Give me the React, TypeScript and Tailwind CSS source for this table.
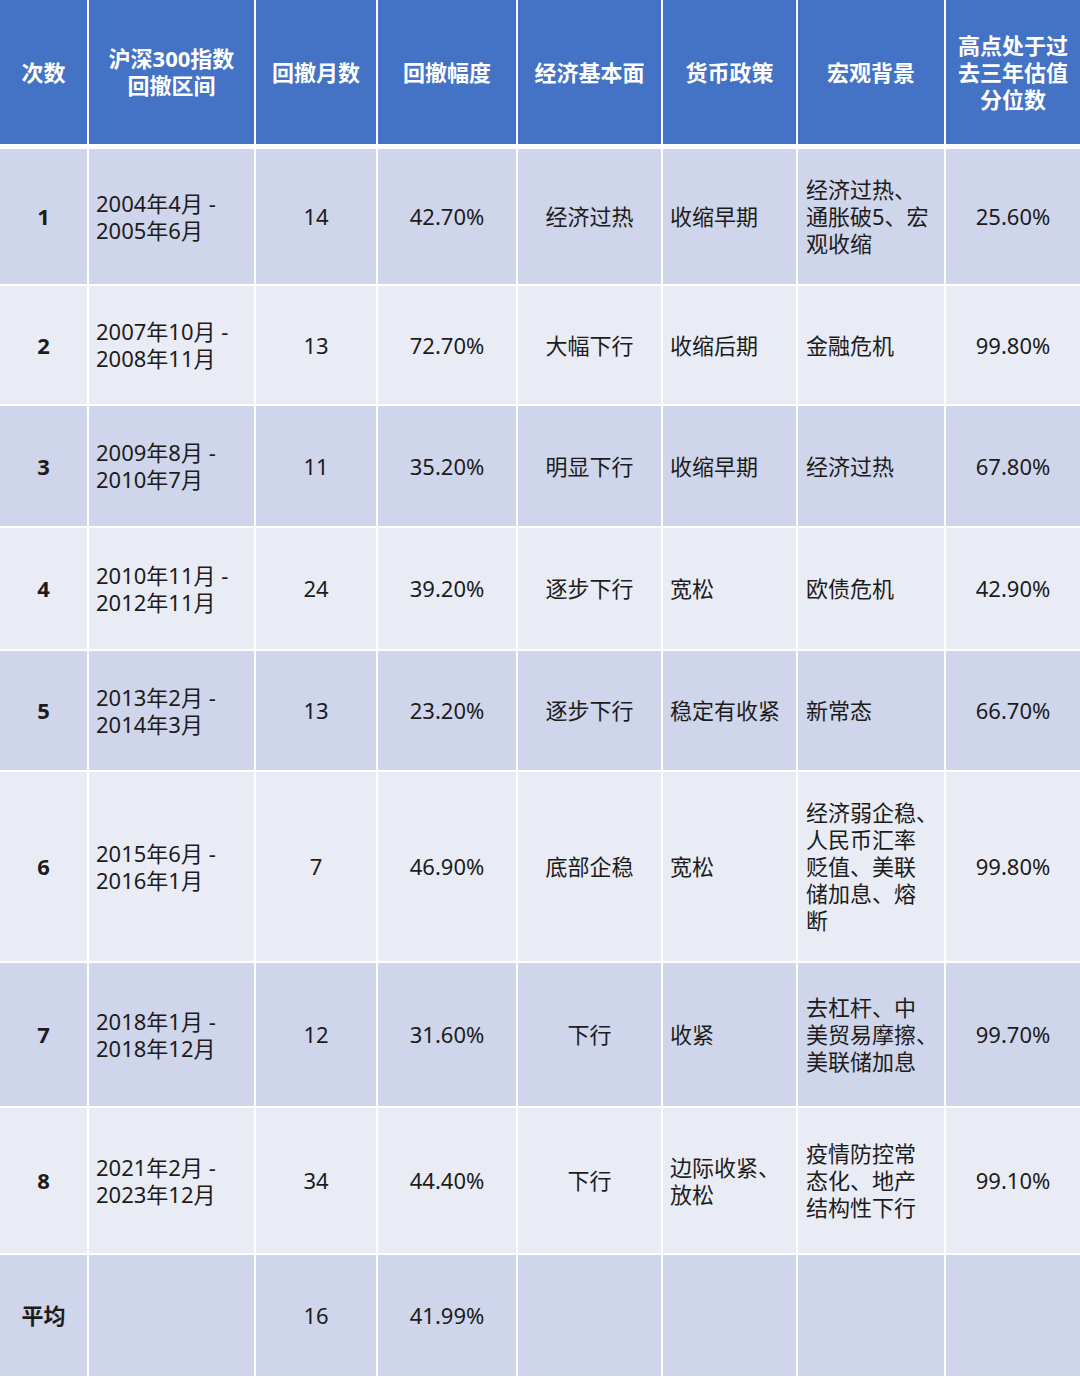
import React from "react";

type Row = {
  no: string;
  range: string[];
  months: string;
  drop: string;
  econ: string;
  policy: string[];
  macro: string[];
  pct: string;
  h: string;
  dark: boolean;
};

const rows: Row[] = [
  { no: "1", range: ["2004年4月 -", "2005年6月"], months: "14", drop: "42.70%", econ: "经济过热", policy: ["收缩早期"], macro: ["经济过热、", "通胀破5、宏", "观收缩"], pct: "25.60%", h: "h-[135px]", dark: true },
  { no: "2", range: ["2007年10月 -", "2008年11月"], months: "13", drop: "72.70%", econ: "大幅下行", policy: ["收缩后期"], macro: ["金融危机"], pct: "99.80%", h: "h-[118px]", dark: false },
  { no: "3", range: ["2009年8月 -", "2010年7月"], months: "11", drop: "35.20%", econ: "明显下行", policy: ["收缩早期"], macro: ["经济过热"], pct: "67.80%", h: "h-[120px]", dark: true },
  { no: "4", range: ["2010年11月 -", "2012年11月"], months: "24", drop: "39.20%", econ: "逐步下行", policy: ["宽松"], macro: ["欧债危机"], pct: "42.90%", h: "h-[121px]", dark: false },
  { no: "5", range: ["2013年2月 -", "2014年3月"], months: "13", drop: "23.20%", econ: "逐步下行", policy: ["稳定有收紧"], macro: ["新常态"], pct: "66.70%", h: "h-[119px]", dark: true },
  { no: "6", range: ["2015年6月 -", "2016年1月"], months: "7", drop: "46.90%", econ: "底部企稳", policy: ["宽松"], macro: ["经济弱企稳、", "人民币汇率", "贬值、美联", "储加息、熔", "断"], pct: "99.80%", h: "h-[189px]", dark: false },
  { no: "7", range: ["2018年1月 -", "2018年12月"], months: "12", drop: "31.60%", econ: "下行", policy: ["收紧"], macro: ["去杠杆、中", "美贸易摩擦、", "美联储加息"], pct: "99.70%", h: "h-[143px]", dark: true },
  { no: "8", range: ["2021年2月 -", "2023年12月"], months: "34", drop: "44.40%", econ: "下行", policy: ["边际收紧、", "放松"], macro: ["疫情防控常", "态化、地产", "结构性下行"], pct: "99.10%", h: "h-[145px]", dark: false },
];

const cols = "grid grid-cols-[87px_165px_120px_138px_143px_133px_146px_1fr] gap-x-[2px]";

// one text block, lines split by <br/>
function Lines({ items }: { items: string[] }) {
  return (
    <p className="whitespace-nowrap">
      {items.map((t, i) => (
        <React.Fragment key={i}>
          {i > 0 && <br />}
          {t}
        </React.Fragment>
      ))}
    </p>
  );
}

export default function App() {
  const head = "bg-[#4472c4] text-white font-bold flex items-center justify-center text-center";
  return (
    <div
      className="w-[1080px] h-[1387px] bg-white text-[22px] leading-[27px] text-[#1c1c1c] [text-spacing-trim:space-all]"
      style={{ fontFamily: '"Noto Sans", "Noto Sans CJK SC", sans-serif' }}
    >
      <div className="flex flex-col gap-y-[2px]">
        {/* HEADER */}
        <div className={`${cols} h-[144px] mb-[3px]`}>
          <div className={head}>次数</div>
          <div className={head}>
            <Lines items={["沪深300指数", "回撤区间"]} />
          </div>
          <div className={head}>回撤月数</div>
          <div className={head}>回撤幅度</div>
          <div className={head}>经济基本面</div>
          <div className={head}>货币政策</div>
          <div className={head}>宏观背景</div>
          <div className={head}>
            <Lines items={["高点处于过", "去三年估值", "分位数"]} />
          </div>
        </div>

        {rows.map((r) => {
          const bg = r.dark ? "bg-[#cfd5ea]" : "bg-[#e9ebf5]";
          const c = `${bg} flex items-center justify-center`;
          const l = `${bg} flex items-center pl-[7px]`;
          return (
            <div key={r.no} className={`${cols} ${r.h}`}>
              <div className={`${c} font-bold`}>{r.no}</div>
              <div className={l}>
                <Lines items={r.range} />
              </div>
              <div className={c}>{r.months}</div>
              <div className={c}>{r.drop}</div>
              <div className={c}>{r.econ}</div>
              <div className={l}>
                <Lines items={r.policy} />
              </div>
              <div className={`${l} pl-[8px]`}>
                <Lines items={r.macro} />
              </div>
              <div className={c}>{r.pct}</div>
            </div>
          );
        })}

        {/* AVERAGE */}
        <div className={`${cols} h-[121px]`}>
          <div className="bg-[#cfd5ea] flex items-center justify-center font-bold">平均</div>
          <div className="bg-[#cfd5ea]" />
          <div className="bg-[#cfd5ea] flex items-center justify-center">16</div>
          <div className="bg-[#cfd5ea] flex items-center justify-center">41.99%</div>
          <div className="bg-[#cfd5ea]" />
          <div className="bg-[#cfd5ea]" />
          <div className="bg-[#cfd5ea]" />
          <div className="bg-[#cfd5ea]" />
        </div>
      </div>
    </div>
  );
}
